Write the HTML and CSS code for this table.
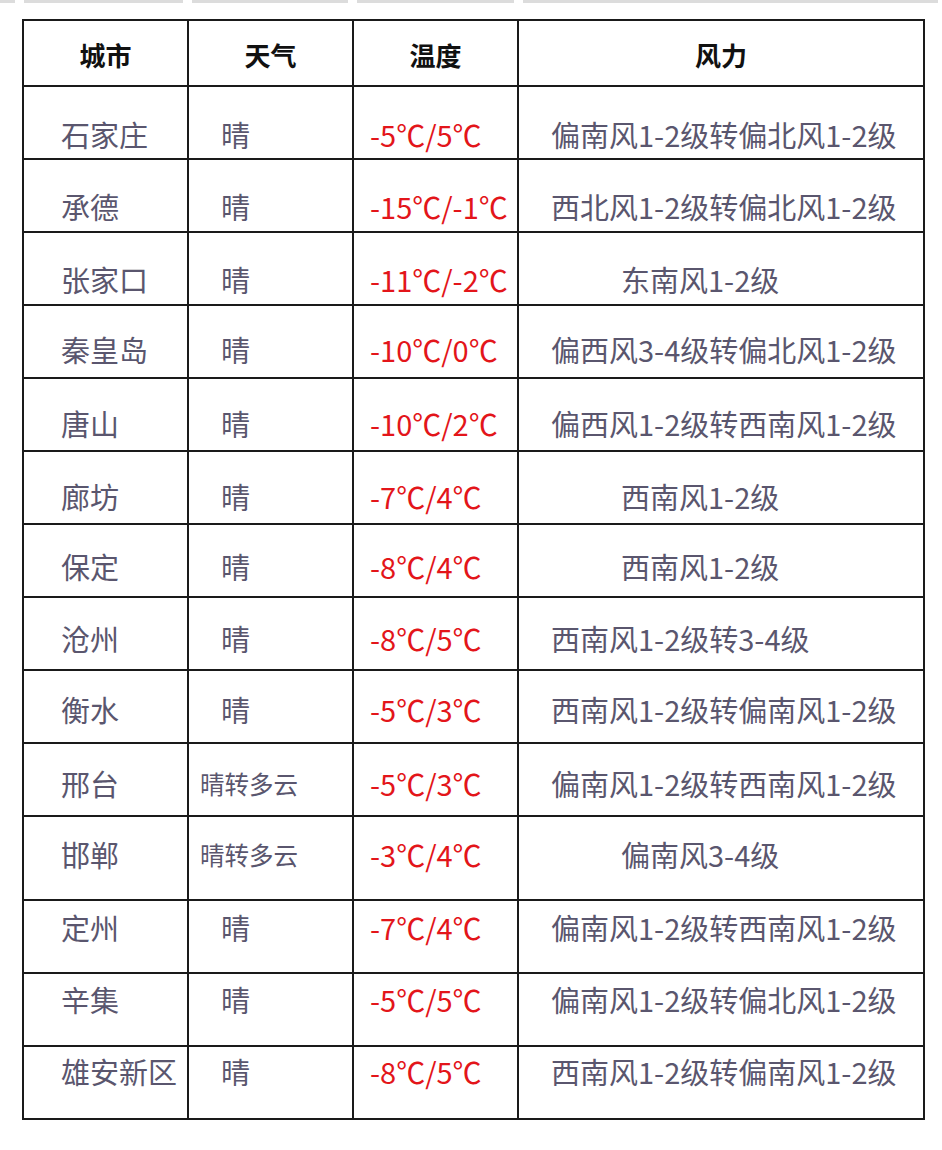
FILE: index.html
```html
<!DOCTYPE html>
<html lang="zh-CN">
<head>
<meta charset="utf-8">
<title>河北天气</title>
<link rel="stylesheet" href="styles.css">
</head>
<body>
<div class="strip">
  <span class="seg s1"></span><span class="seg s2"></span><span class="seg s3"></span><span class="seg s4"></span><span class="seg s5"></span>
</div>
<table class="wx">
  <colgroup>
    <col class="c-city"><col class="c-weather"><col class="c-temp"><col class="c-wind">
  </colgroup>
  <thead>
    <tr class="head">
      <th>城市</th><th>天气</th><th>温度</th><th>风力</th>
    </tr>
  </thead>
  <tbody>
    <tr class="t38"><td class="city">石家庄</td><td class="weather">晴</td><td class="temp">-5℃/5℃</td><td class="wind">偏南风1-2级转偏北风1-2级</td></tr>
    <tr class="t37"><td class="city">承德</td><td class="weather">晴</td><td class="temp">-15℃/-1℃</td><td class="wind">西北风1-2级转偏北风1-2级</td></tr>
    <tr class="t37"><td class="city">张家口</td><td class="weather">晴</td><td class="temp">-11℃/-2℃</td><td class="wind short">东南风1-2级</td></tr>
    <tr class="t34"><td class="city">秦皇岛</td><td class="weather">晴</td><td class="temp">-10℃/0℃</td><td class="wind">偏西风3-4级转偏北风1-2级</td></tr>
    <tr class="t35"><td class="city">唐山</td><td class="weather">晴</td><td class="temp">-10℃/2℃</td><td class="wind">偏西风1-2级转西南风1-2级</td></tr>
    <tr class="t35"><td class="city">廊坊</td><td class="weather">晴</td><td class="temp">-7℃/4℃</td><td class="wind short">西南风1-2级</td></tr>
    <tr class="t32"><td class="city">保定</td><td class="weather">晴</td><td class="temp">-8℃/4℃</td><td class="wind short">西南风1-2级</td></tr>
    <tr class="t31"><td class="city">沧州</td><td class="weather">晴</td><td class="temp">-8℃/5℃</td><td class="wind">西南风1-2级转3-4级</td></tr>
    <tr class="t29"><td class="city">衡水</td><td class="weather">晴</td><td class="temp">-5℃/3℃</td><td class="wind">西南风1-2级转偏南风1-2级</td></tr>
    <tr class="t30"><td class="city">邢台</td><td class="weather small">晴转多云</td><td class="temp">-5℃/3℃</td><td class="wind">偏南风1-2级转西南风1-2级</td></tr>
    <tr class="t28 tall"><td class="city">邯郸</td><td class="weather small">晴转多云</td><td class="temp">-3℃/4℃</td><td class="wind short">偏南风3-4级</td></tr>
    <tr class="t17"><td class="city">定州</td><td class="weather">晴</td><td class="temp">-7℃/4℃</td><td class="wind">偏南风1-2级转西南风1-2级</td></tr>
    <tr class="t16"><td class="city">辛集</td><td class="weather">晴</td><td class="temp">-5℃/5℃</td><td class="wind">偏南风1-2级转偏北风1-2级</td></tr>
    <tr class="t15"><td class="city">雄安新区</td><td class="weather">晴</td><td class="temp">-8℃/5℃</td><td class="wind">西南风1-2级转偏南风1-2级</td></tr>
  </tbody>
</table>
</body>
</html>
```

FILE: styles.css
```css
html, body {
  margin: 0;
  padding: 0;
  background: #ffffff;
}

body {
  font-family: "Noto Sans CJK SC", "Noto Sans", sans-serif;
  color: #5a566e;
}

.strip {
  display: flex;
  height: 3px;
  gap: 9px;
}

.seg {
  display: block;
  height: 3px;
  background: #dcdcdc;
}

.s1 { width: 15px; }
.s2 { width: 159px; }
.s3 { width: 156px; }
.s4 { width: 157px; }
.s5 { width: 415px; }

.wx {
  border-collapse: collapse;
  table-layout: fixed;
  width: 901px;
  margin: 16px 0 0 22px;
}

.c-city { width: 165px; }
.c-weather { width: 165px; }
.c-temp { width: 165px; }
.c-wind { width: 406px; }

.wx th,
.wx td {
  border: 2px solid #1a1a1a;
  padding: 0;
}

.head {
  height: 66px;
}

.head th {
  font-size: 26px;
  font-weight: 700;
  color: #111111;
  text-align: center;
  vertical-align: middle;
  padding-top: 4px;
  line-height: 1;
}

tbody tr {
  height: 73px;
}

tbody tr.tall {
  height: 84px;
}

.wx td {
  font-size: 29px;
  line-height: 29px;
  vertical-align: top;
  text-align: left;
  white-space: nowrap;
}

.wx td.city { padding-left: 37px; }
.wx td.weather { padding-left: 32px; }
.wx td.weather.small { padding-left: 11px; font-size: 24.5px; }
.wx td.temp { padding-left: 16px; color: #e3151a; }
.wx td.wind { padding-left: 32px; }
.wx td.wind.short { padding-left: 102px; }

.t38 td { padding-top: 33px; }
.t37 td { padding-top: 32px; }
.t35 td { padding-top: 30px; }
.t34 td { padding-top: 29px; }
.t32 td { padding-top: 27px; }
.t31 td { padding-top: 26px; }
.t30 td { padding-top: 25px; }
.t29 td { padding-top: 24px; }
.t28 td { padding-top: 23px; }
.t17 td { padding-top: 12px; }
.t16 td { padding-top: 11px; }
.t15 td { padding-top: 10px; }
```
